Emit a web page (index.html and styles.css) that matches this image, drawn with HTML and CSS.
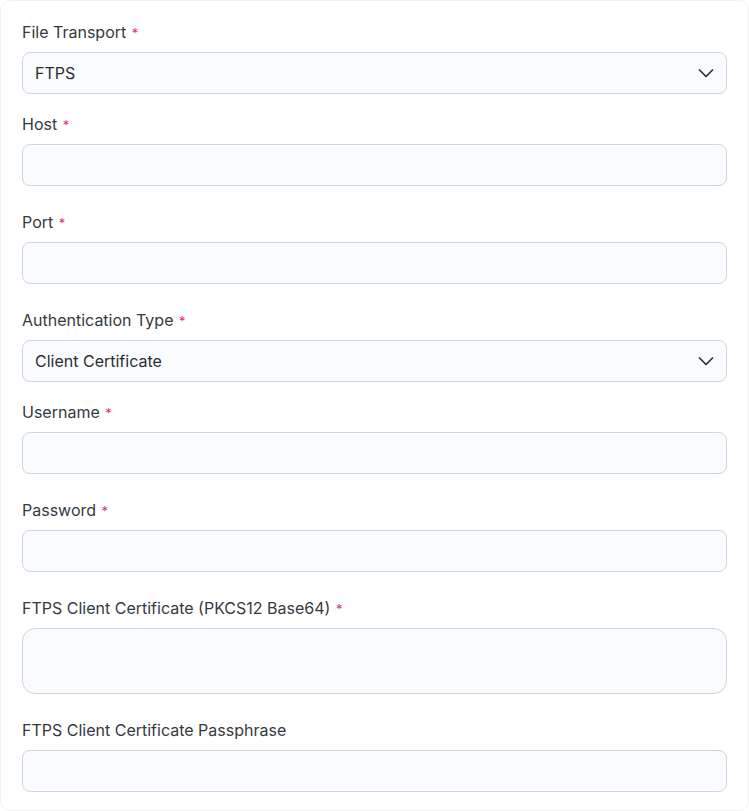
FILE: index.html
```html
<!DOCTYPE html>
<html lang="en">
<head>
<meta charset="utf-8">
<title>FTPS settings</title>
<link rel="stylesheet" href="styles.css">
</head>
<body>
<div class="card">
  <form class="form">
    <div class="field field-select">
      <label class="label">File Transport <span class="req">*</span></label>
      <div class="control select">
        <span class="value">FTPS</span>
        <svg class="chev" width="16" height="16" viewBox="0 0 16 16"><path d="M1.5 5 L8 11.5 L14.5 5" fill="none" stroke="#2b2f36" stroke-width="1.7" stroke-linecap="round" stroke-linejoin="round"/></svg>
      </div>
    </div>
    <div class="field">
      <label class="label">Host <span class="req">*</span></label>
      <div class="control"></div>
    </div>
    <div class="field">
      <label class="label">Port <span class="req">*</span></label>
      <div class="control"></div>
    </div>
    <div class="field field-select">
      <label class="label">Authentication Type <span class="req">*</span></label>
      <div class="control select">
        <span class="value">Client Certificate</span>
        <svg class="chev" width="16" height="16" viewBox="0 0 16 16"><path d="M1.5 5 L8 11.5 L14.5 5" fill="none" stroke="#2b2f36" stroke-width="1.7" stroke-linecap="round" stroke-linejoin="round"/></svg>
      </div>
    </div>
    <div class="field">
      <label class="label">Username <span class="req">*</span></label>
      <div class="control"></div>
    </div>
    <div class="field">
      <label class="label">Password <span class="req">*</span></label>
      <div class="control"></div>
    </div>
    <div class="field">
      <label class="label">FTPS Client Certificate (PKCS12 Base64) <span class="req">*</span></label>
      <div class="control textarea"></div>
    </div>
    <div class="field">
      <label class="label">FTPS Client Certificate Passphrase</label>
      <div class="control"></div>
    </div>
  </form>
</div>
</body>
</html>
```
FILE: styles.css
```css
html, body {
  margin: 0;
  padding: 0;
  background: #ffffff;
}
body {
  font-family: Inter, "Noto Sans", sans-serif;
  color: #2f3338;
}
.card {
  box-sizing: border-box;
  width: 749px;
  height: 811px;
  border: 1px solid #f1f2f4;
  border-radius: 10px;
  padding: 21px 21px 0 21px;
  overflow: hidden;
}
.form {
  display: flex;
  flex-direction: column;
}
.field {
  display: flex;
  flex-direction: column;
  margin-bottom: 26px;
}
.field-select {
  margin-bottom: 20px;
}
.label {
  font-size: 16px;
  line-height: 20px;
  height: 20px;
  color: #363a40;
  margin-bottom: 10px;
}
.req {
  color: #e5306a;
  font-size: 13px;
  line-height: 1;
  margin-left: 1px;
}
.control {
  box-sizing: border-box;
  height: 42px;
  border: 1px solid #cdd6e3;
  border-radius: 8px;
  background: #fafbfc;
  display: flex;
  align-items: center;
  padding: 0 12px;
}
.textarea {
  height: 66px;
  border-radius: 13px;
}
.select {
  justify-content: space-between;
}
.value {
  font-size: 16px;
  color: #2a2e33;
}
.chev {
  display: block;
}
```
